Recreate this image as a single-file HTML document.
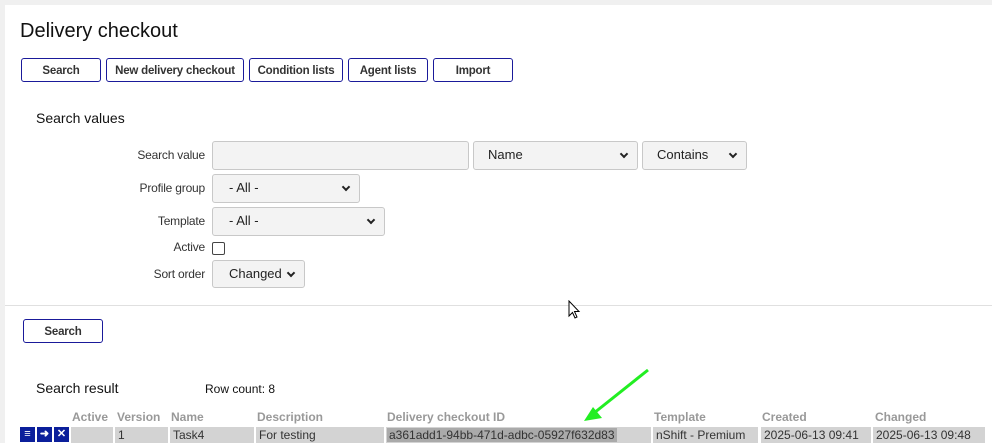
<!DOCTYPE html>
<html><head><style>
body{margin:0;width:992px;height:443px;background:#f0f0f0;font-family:"Liberation Sans",Arial,sans-serif;position:relative;overflow:hidden}
.panel{position:absolute;left:5px;top:5px;width:987px;height:438px;background:#fff}
.a{position:absolute;white-space:nowrap}
.btn{position:absolute;top:58px;height:24px;border:1px solid #1a1a9a;border-radius:3px;background:#fff;font-size:11.5px;font-weight:bold;color:#333;text-align:center;line-height:24px;box-sizing:border-box;letter-spacing:-0.2px}
.lbl{position:absolute;font-size:12px;color:#333;text-align:right;width:100px;left:105px;letter-spacing:-0.2px}
.sel{position:absolute;background:#f3f3f3;border:1px solid #c8c8c8;border-radius:3px;box-sizing:border-box;font-size:13px;color:#222;line-height:26px;padding-left:16px}
.sel.d:after{content:"";position:absolute;right:10px;top:9px;width:4px;height:4px;border-right:2px solid #222;border-bottom:2px solid #222;transform:rotate(45deg)}
.th{position:absolute;top:410px;font-size:12px;font-weight:bold;color:#999}
.td{position:absolute;top:427px;height:16px;background:#d3d3d3;font-size:12px;color:#333;line-height:16px;padding-left:3px;box-sizing:border-box}
.ic{position:absolute;top:427px;width:15px;height:15px;background:#0b1f9b;color:#fff;font-size:11px;text-align:center;line-height:15px;font-weight:bold}
</style></head><body>
<div class="panel"></div>
<div class="a" style="left:20px;top:20px;font-size:20px;color:#111">Delivery checkout</div>
<div class="btn" style="left:21px;width:80px">Search</div>
<div class="btn" style="left:106px;width:138px">New delivery checkout</div>
<div class="btn" style="left:249px;width:94px">Condition lists</div>
<div class="btn" style="left:348px;width:80px">Agent lists</div>
<div class="btn" style="left:433px;width:80px">Import</div>
<div class="a" style="left:36px;top:110px;font-size:14px;color:#111">Search values</div>
<div class="lbl" style="top:148px">Search value</div>
<div class="sel" style="left:212px;top:141px;width:257px;height:29px"></div>
<div class="sel d" style="left:473px;top:141px;width:165px;height:29px;padding-left:14px">Name</div>
<div class="sel d" style="left:642px;top:141px;width:105px;height:29px;padding-left:14px">Contains</div>
<div class="lbl" style="top:181px">Profile group</div>
<div class="sel d" style="left:212px;top:174px;width:148px;height:29px">- All -</div>
<div class="lbl" style="top:214px">Template</div>
<div class="sel d" style="left:212px;top:207px;width:173px;height:29px">- All -</div>
<div class="lbl" style="top:240px">Active</div>
<div class="a" style="left:212px;top:242px;width:11px;height:11px;border:1px solid #444;border-radius:2px"></div>
<div class="lbl" style="top:267px">Sort order</div>
<div class="sel d" style="left:212px;top:260px;width:93px;height:28px;padding-left:16px">Changed</div>
<div class="a" style="left:5px;top:305px;width:987px;height:1px;background:#e0e0e0"></div>
<svg class="a" style="left:568px;top:300px" width="14" height="20"><path d="M1 1 L1 16 L4.5 12.5 L7 18 L9 17 L6.5 11.5 L11 11.5 Z" fill="#fff" stroke="#000" stroke-width="1"/></svg>
<div class="btn" style="left:23px;top:319px;width:80px">Search</div>
<div class="a" style="left:36px;top:380px;font-size:14px;color:#111">Search result</div>
<div class="a" style="left:205px;top:382px;font-size:12px;color:#111">Row count: 8</div>
<svg class="a" style="left:580px;top:365px" width="75" height="60"><line x1="68" y1="5" x2="14" y2="48" stroke="#22ee22" stroke-width="3"/><path d="M4 56 L22 53 L13 42 Z" fill="#22ee22"/></svg>
<div class="th" style="left:72px">Active</div>
<div class="th" style="left:117px">Version</div>
<div class="th" style="left:171px">Name</div>
<div class="th" style="left:257px">Description</div>
<div class="th" style="left:387px">Delivery checkout ID</div>
<div class="th" style="left:654px">Template</div>
<div class="th" style="left:762px">Created</div>
<div class="th" style="left:875px">Changed</div>
<div class="ic" style="left:20px">≡</div>
<div class="ic" style="left:37px">➜</div>
<div class="ic" style="left:54px">✕</div>
<div class="td" style="left:71px;width:42px"></div>
<div class="td" style="left:115px;width:53px">1</div>
<div class="td" style="left:170px;width:84px">Task4</div>
<div class="td" style="left:256px;width:128px">For testing</div>
<div class="td" style="left:386px;width:265px"><span style="background:#aaa;margin-left:-2px;padding:0 2px">a361add1-94bb-471d-adbc-05927f632d83</span></div>
<div class="td" style="left:653px;width:105px">nShift - Premium</div>
<div class="td" style="left:761px;width:110px">2025-06-13 09:41</div>
<div class="td" style="left:873px;width:112px">2025-06-13 09:48</div>
</body></html>
